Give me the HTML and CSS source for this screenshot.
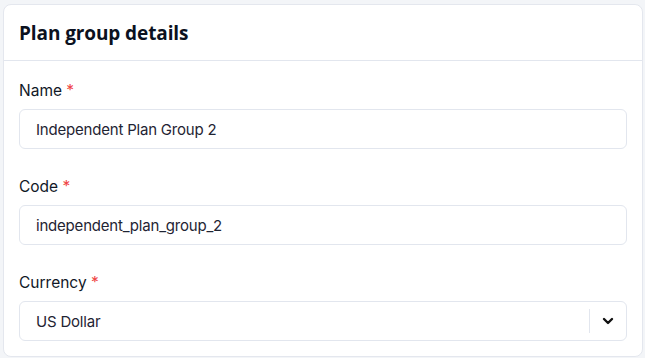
FILE: index.html
```html
<!DOCTYPE html>
<html lang="en">
<head>
    <meta charset="UTF-8">
    <meta name="viewport" content="width=device-width, initial-scale=1.0">
    <title>Plan group details</title>
    <link rel="stylesheet" href="styles.css">
</head>
<body>
    <div class="card">
        <div class="card-header">
            <h2>Plan group details</h2>
        </div>
        <div class="card-body">
            <div class="field">
                <label>Name <span class="req">*</span></label>
                <input type="text" class="input" value="Independent Plan Group 2">
            </div>
            <div class="field">
                <label>Code <span class="req">*</span></label>
                <input type="text" class="input" value="independent_plan_group_2">
            </div>
            <div class="field">
                <label>Currency <span class="req">*</span></label>
                <div class="select">
                    <span class="select-value">US Dollar</span>
                    <span class="select-sep"></span>
                    <span class="select-arrow">
                        <svg width="14" height="14" viewBox="0 0 14 14">
                            <path d="M3 5 L7 9 L11 5" fill="none" stroke="#111" stroke-width="2.4" stroke-linecap="round" stroke-linejoin="round"/>
                        </svg>
                    </span>
                </div>
            </div>
        </div>
    </div>
</body>
</html>
```

FILE: styles.css
```css
* {
    margin: 0;
    padding: 0;
    box-sizing: border-box;
}

body {
    font-family: Inter, 'Noto Sans', sans-serif;
    background: #f3f5f8;
    padding: 4px 2px 1px 3px;
    color: #0f1729;
}

.card {
    background: #ffffff;
    border: 1px solid #e4e7ee;
    border-radius: 8px;
    height: 353px;
}

.card-header {
    height: 56px;
    padding: 0 15px;
    display: flex;
    align-items: center;
    border-bottom: 1px solid #e2e6ee;
}

.card-header h2 {
    font-family: 'Open Sans', sans-serif;
    font-size: 19px;
    font-weight: 700;
    color: #0b1120;
    letter-spacing: -0.1px;
}

.card-body {
    padding: 20px 15px 16px;
}

.field + .field {
    margin-top: 28px;
}

.field label {
    display: block;
    font-size: 15.5px;
    line-height: 20px;
    margin-bottom: 8px;
    color: #111827;
}

.req {
    color: #ef4444;
}

.input,
.select {
    width: 100%;
    height: 40px;
    border: 1px solid #e2e6ee;
    border-radius: 6px;
    background: #fff;
    font-family: Inter, 'Noto Sans', sans-serif;
    font-size: 15px;
    color: #1f2433;
    padding: 0 16px;
    outline: none;
    letter-spacing: -0.2px;
}

.select {
    display: flex;
    align-items: center;
    padding: 0;
}

.select-value {
    flex: 1;
    padding-left: 16px;
}

.select-sep {
    width: 1px;
    height: 24px;
    background: #e2e6ee;
}

.select-arrow {
    width: 36px;
    display: flex;
    justify-content: center;
    align-items: center;
}
```
